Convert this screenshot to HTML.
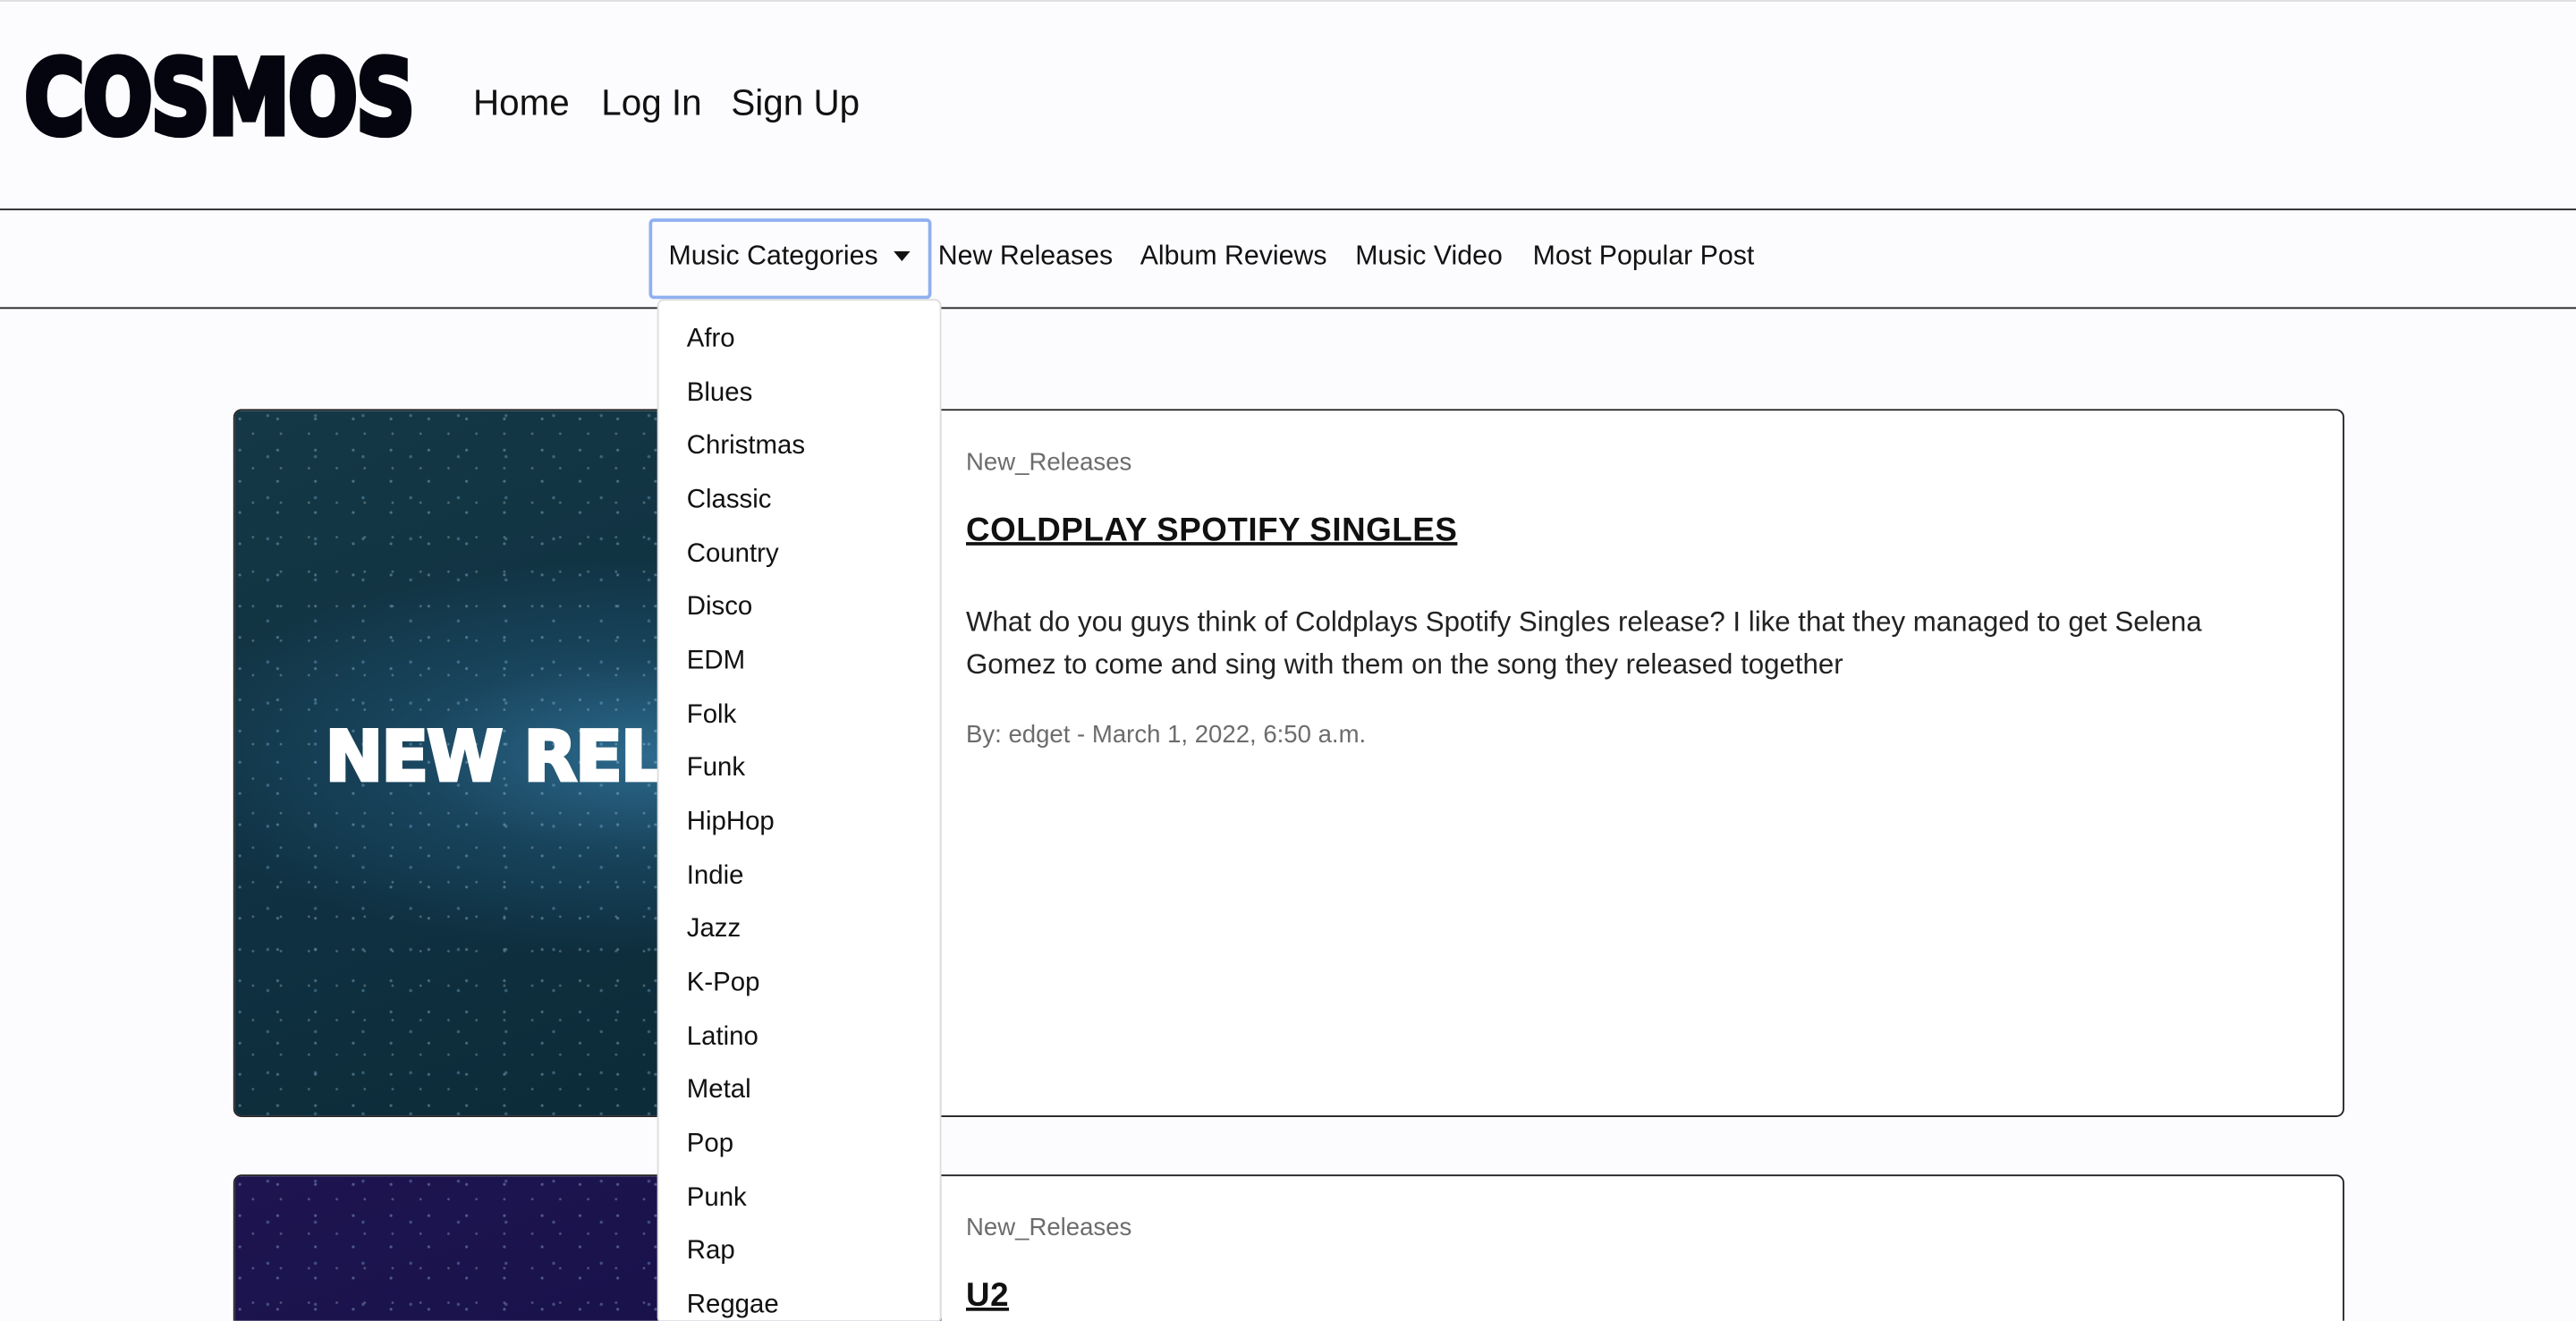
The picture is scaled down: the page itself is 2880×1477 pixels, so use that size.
<!DOCTYPE html>
<html><head><meta charset="utf-8"><style>
html,body{margin:0;padding:0;width:2880px;height:1476px;overflow:hidden;background:#fcfbfe}
#w{position:absolute;left:0;top:0;width:1568px;height:804px;transform:scale(1.836735);transform-origin:0 0;font-family:"Liberation Sans",sans-serif;color:#111;overflow:hidden;border-top:1px solid #ddd;box-sizing:border-box}
.abs{position:absolute}
.logo{left:15px;top:22px;font-size:62px;font-weight:900;letter-spacing:-1px;color:#05050f;transform:scaleX(0.8);transform-origin:0 0;font-family:"DejaVu Sans","Liberation Sans",sans-serif;white-space:nowrap;-webkit-text-stroke:4px #05050f}
.top a{position:absolute;top:49px;font-size:22px;color:#111;text-decoration:none}
.hl{left:0;width:1568px;height:1px;background:#222}
.nav{top:146px;font-size:16.5px;color:#111}
.dd{left:395px;top:132px;width:168px;height:45px;border:2px solid #8fb0f0;border-radius:3px}
.menu{left:400px;top:181px;width:171px;height:622px;background:#fff;border:1px solid #ddd;border-radius:4px}
.menu div{position:absolute;left:17px;font-size:16px;color:#111}
.card{left:142px;width:1283px;height:429px;border:1px solid #222;border-radius:5px;background:#fff;overflow:hidden}
.img{position:absolute;left:0;top:0;width:430px;height:100%}
.stars{opacity:.45;background-image:radial-gradient(circle at 3px 5px,rgba(180,225,255,.8) 0.6px,transparent 1.1px),radial-gradient(circle at 11px 14px,rgba(255,255,255,.6) 0.5px,transparent 1px),radial-gradient(circle at 20px 3px,rgba(150,210,255,.7) 0.7px,transparent 1.2px);background-size:23px 19px,17px 21px,29px 25px}
.cat{position:absolute;left:445px;font-size:15px;color:#6c6c6c}
.ttl{position:absolute;left:445px;font-size:20px;font-weight:bold;text-decoration:underline;letter-spacing:.3px}
</style></head><body><div id="w">
<div class="abs logo">COSMOS</div>
<div class="top"><a style="left:288px">Home</a><a style="left:366px">Log In</a><a style="left:445px">Sign Up</a></div>
<div class="abs hl" style="top:126px"></div>
<div class="abs hl" style="top:186px"></div>

<div class="abs card" style="top:248px">
 <div class="img" style="background:radial-gradient(ellipse 300px 120px at 250px 210px,#2d6a8c 0%,rgba(30,80,110,.6) 50%,transparent 100%),linear-gradient(160deg,#143845,#0f3142 50%,#0c2a36)"></div>
 <div class="img stars"></div>
 <div style="position:absolute;left:55px;top:186px;font-size:42px;font-weight:900;color:#fff;font-family:'DejaVu Sans',sans-serif;letter-spacing:-1px;-webkit-text-stroke:2px #fff">NEW RELEASES</div>
 <div class="cat" style="top:23px">New_Releases</div>
 <div class="ttl" style="top:62px">COLDPLAY SPOTIFY SINGLES</div>
 <div style="position:absolute;left:445px;top:116px;width:790px;font-size:17px;line-height:26px;color:#222">What do you guys think of Coldplays Spotify Singles release? I like that they managed to get Selena Gomez to come and sing with them on the song they released together</div>
 <div class="cat" style="top:189px">By: edget - March 1, 2022, 6:50 a.m.</div>
</div>

<div class="abs card" style="top:714px">
 <div class="img" style="background:linear-gradient(160deg,#1e1550,#150f45 60%,#1a1450)"></div>
 <div class="img stars"></div>
 <div class="cat" style="top:23px">New_Releases</div>
 <div class="ttl" style="top:62px">U2</div>
</div>

<div class="abs dd"></div>
<div class="abs nav" style="left:407px">Music Categories</div>
<div class="abs" style="left:544px;top:152px;width:0;height:0;border-left:5px solid transparent;border-right:5px solid transparent;border-top:6px solid #111"></div>
<div class="abs nav" style="left:571px">New Releases</div>
<div class="abs nav" style="left:694px">Album Reviews</div>
<div class="abs nav" style="left:825px">Music Video</div>
<div class="abs nav" style="left:933px">Most Popular Post</div>

<div class="abs menu">
<div style="top:15px">Afro</div><div style="top:48px">Blues</div><div style="top:80px">Christmas</div><div style="top:113px">Classic</div><div style="top:146px">Country</div><div style="top:178px">Disco</div><div style="top:211px">EDM</div><div style="top:244px">Folk</div><div style="top:276px">Funk</div><div style="top:309px">HipHop</div><div style="top:342px">Indie</div><div style="top:374px">Jazz</div><div style="top:407px">K-Pop</div><div style="top:440px">Latino</div><div style="top:472px">Metal</div><div style="top:505px">Pop</div><div style="top:538px">Punk</div><div style="top:570px">Rap</div><div style="top:603px">Reggae</div>
</div>
</div></body></html>
